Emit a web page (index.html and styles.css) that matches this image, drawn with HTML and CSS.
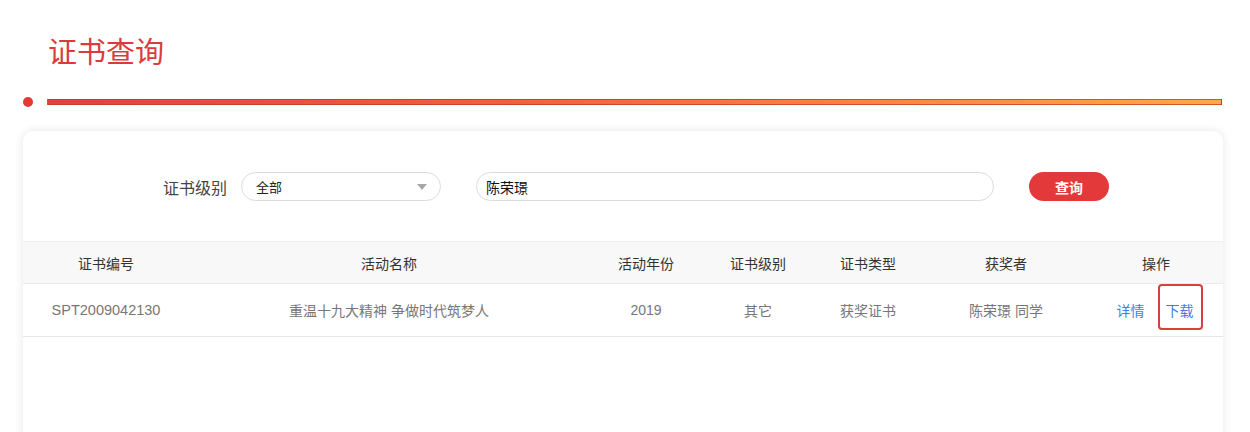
FILE: index.html
```html
<!DOCTYPE html>
<html lang="zh-CN">
<head>
<meta charset="utf-8">
<title>证书查询</title>
<link rel="stylesheet" href="styles.css">
</head>
<body>
<div class="page">
  <h1 class="title">证书查询</h1>
  <div class="divider">
    <span class="dot"></span>
    <span class="bar"></span>
  </div>
  <div class="card">
    <div class="filters">
      <span class="label">证书级别</span>
      <div class="select">
        <span>全部</span>
        <svg class="caret" width="10" height="6" viewBox="0 0 10 6"><path d="M0 0H10L5 6Z" fill="#a8a8a8"/></svg>
      </div>
      <div class="input">陈荣璟</div>
      <button class="btn">查询</button>
    </div>
    <table class="grid">
      <colgroup>
        <col class="c1"><col class="c2"><col class="c3"><col class="c4"><col class="c5"><col class="c6"><col class="c7">
      </colgroup>
      <thead>
        <tr><th>证书编号</th><th>活动名称</th><th>活动年份</th><th>证书级别</th><th>证书类型</th><th>获奖者</th><th>操作</th></tr>
      </thead>
      <tbody>
        <tr>
          <td class="code">SPT2009042130</td>
          <td>重温十九大精神 争做时代筑梦人</td>
          <td>2019</td>
          <td>其它</td>
          <td>获奖证书</td>
          <td>陈荣璟 同学</td>
          <td><span class="ops"><a class="link">详情</a><a class="link mark">下载</a></span></td>
        </tr>
      </tbody>
    </table>
  </div>
</div>
</body>
</html>
```
FILE: styles.css
```css
html, body {
  margin: 0;
  padding: 0;
  background: #fff;
}
body {
  font-family: "Liberation Sans", "Noto Sans CJK SC", sans-serif;
  color: #333;
  overflow: hidden;
}
.page {
  padding-top: 30px;
}
.title {
  margin: 0 0 0 48px;
  font-family: "Noto Sans CJK SC", sans-serif;
  font-weight: 400;
  font-size: 29px;
  line-height: 40px;
  color: #dc3a3c;
}
.divider {
  display: flex;
  align-items: center;
  gap: 14px;
  margin: 27px 0 0 23px;
  width: 1199px;
  height: 10px;
}
.dot {
  width: 10px;
  height: 10px;
  border-radius: 50%;
  background: #e53935;
  flex: none;
}
.bar {
  flex: 1;
  height: 4px;
  border: 1px solid rgba(190, 60, 35, 0.75);
  background: linear-gradient(90deg, #e6403a 0%, #f3603e 40%, #ffa84c 100%);
  margin-top: -1px;
}
.card {
  margin: 24px 0 0 23px;
  width: 1200px;
  min-height: 330px;
  background: #fff;
  border-radius: 10px;
  box-shadow: 0 0 10px rgba(0, 0, 0, 0.1);
  padding-top: 41px;
  box-sizing: border-box;
}
.filters {
  display: flex;
  align-items: center;
  padding-left: 140px;
  height: 29px;
}
.label {
  font-family: "Noto Sans CJK SC", sans-serif;
  font-size: 16px;
  color: #444;
  margin-right: 14px;
}
.select {
  box-sizing: border-box;
  width: 200px;
  height: 29px;
  border: 1px solid #dcdcdc;
  border-radius: 15px;
  display: flex;
  align-items: center;
  justify-content: space-between;
  padding: 0 13px 0 14px;
  font-family: "Noto Sans CJK SC", sans-serif;
  font-size: 13px;
  color: #222;
  margin-right: 35px;
}
.caret {
  display: block;
}
.input {
  box-sizing: border-box;
  width: 518px;
  height: 29px;
  border: 1px solid #dcdcdc;
  border-radius: 15px;
  display: flex;
  align-items: center;
  padding-left: 9px;
  font-family: "Noto Sans CJK SC", sans-serif;
  font-size: 14px;
  color: #111;
  margin-right: 35px;
}
.btn {
  width: 80px;
  height: 29px;
  border: 0;
  border-radius: 15px;
  background: #e4393b;
  color: #fff;
  font-family: "Noto Sans CJK SC", sans-serif;
  font-size: 14px;
  font-weight: 700;
  padding: 0;
}
.grid {
  margin-top: 40px;
  width: 100%;
  border-collapse: collapse;
  table-layout: fixed;
  font-size: 14px;
}
.c1 { width: 166px; }
.c2 { width: 400px; }
.c3 { width: 114px; }
.c4 { width: 110px; }
.c5 { width: 110px; }
.c6 { width: 166px; }
.c7 { width: 134px; }
.grid th {
  height: 41px;
  background: #f8f8f8;
  border-top: 1px solid #f0f0f0;
  border-bottom: 1px solid #ebebeb;
  font-weight: 400;
  color: #333;
  text-align: center;
  padding: 0;
}
.grid td {
  height: 52px;
  border-bottom: 1px solid #e6e6e6;
  color: #777;
  text-align: center;
  padding: 0;
}
.grid td.code {
  font-size: 14.5px;
}
.ops {
  display: inline-flex;
  gap: 21px;
  margin-left: -2px;
}
.link {
  color: #3d7fe0;
  cursor: pointer;
}
.mark {
  position: relative;
}
.mark::after {
  content: "";
  position: absolute;
  left: -8px;
  right: -9px;
  top: -16px;
  bottom: -10px;
  border: 2.5px solid #d8403b;
  border-radius: 4px;
}
```
